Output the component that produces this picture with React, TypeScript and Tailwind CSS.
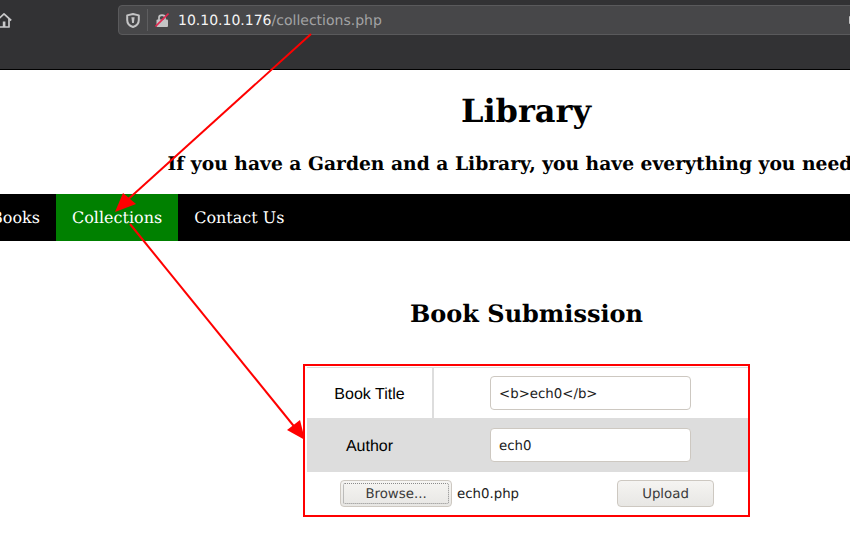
const serif = { fontFamily: '"DejaVu Serif", serif' };
const dejavu = { fontFamily: '"DejaVu Sans", sans-serif' };

function HomeIcon() {
  return (
    <svg width="16" height="15" viewBox="0 0 16 15" className="shrink-0 -ml-[4px]" fill="none" stroke="#c9c9ca" strokeWidth="1.7" strokeLinejoin="round">
      <path d="M0.8 7.5 L8 0.9 L15.2 7.5" />
      <path d="M3 6 V14 H13 V6" />
      <rect x="6.8" y="8.5" width="2.6" height="5.5" fill="#c9c9ca" stroke="none" />
    </svg>
  );
}

function ShieldIcon() {
  return (
    <svg width="14" height="15" viewBox="0 0 14 15" fill="none">
      <path d="M7 1 L12.8 2.4 V7 C12.8 10.6 10 13 7 14 C4 13 1.2 10.6 1.2 7 V2.4 Z" stroke="#c4c4c5" strokeWidth="2" strokeLinejoin="round" />
      <path d="M5.4 4.2 H8.6 L7.9 10 H6.1 Z" fill="#c4c4c5" />
    </svg>
  );
}

function BrokenLockIcon() {
  return (
    <svg width="14" height="14" viewBox="0 0 14 14" fill="none">
      <rect x="1.5" y="6.5" width="11.5" height="7.5" rx="1" fill="#c4c4c5" />
      <path d="M4 7 V4.5 C4 1.2 10 1.2 10 4.5 V7" stroke="#c4c4c5" strokeWidth="1.7" />
      <path d="M0.5 13.5 L13.5 0.5" stroke="#e22850" strokeWidth="1.6" />
    </svg>
  );
}

function Arrows() {
  return (
    <svg width="850" height="533" className="absolute top-0 left-0 pointer-events-none">
      <path d="M311 34 L124 203" stroke="#ff0000" strokeWidth="2" fill="none" />
      <path d="M115 212 L123 193 L136 204 Z" fill="#ff0000" />
      <path d="M130 224 L297 430" stroke="#ff0000" strokeWidth="2" fill="none" />
      <path d="M305 440 L287 430 L300 420 Z" fill="#ff0000" />
    </svg>
  );
}

export default function App() {
  return (
    <div className="relative w-[850px] h-[533px] overflow-hidden bg-white [text-rendering:geometricPrecision]">
      <div className="h-[70px] bg-[#323234] border-b border-black">
        <div className="flex items-center h-[40px]">
          <HomeIcon />
          <div className="ml-[106px] flex items-center h-[30px] w-[760px] shrink-0 bg-[#474749] border border-[#5a5a5c] rounded-[4px]" style={dejavu}>
            <div className="w-[28px] flex justify-center shrink-0"><ShieldIcon /></div>
            <div className="w-px h-[22px] bg-[#5e5e60]" />
            <div className="ml-[7px] shrink-0"><BrokenLockIcon /></div>
            <span className="ml-[9px] pt-[2px] text-[14px] text-[#f4f4f4]">10.10.10.176<span className="text-[#a3a3a4]">/collections.php</span></span>
            <div className="ml-auto mr-[25px] w-[3px] h-[8px] rounded-[1px] bg-[#c4c4c5]" />
          </div>
        </div>
      </div>

      <div className="text-black text-center" style={serif}>
        <h1 className="w-[1052px] pt-[19px] text-[32px] leading-[44px] font-bold">Library</h1>
        <h3 className="w-[1020px] mt-[19px] text-[18.72px] leading-[24px] font-bold whitespace-nowrap">If you have a Garden and a Library, you have everything you need</h3>
      </div>

      <nav className="mt-[18px] h-[47px] bg-black flex text-[16px] text-white" style={serif}>
        <a className="-ml-[25px] px-[16px] leading-[47px]">Books</a>
        <a className="px-[16px] leading-[47px] bg-[#008000]">Collections</a>
        <a className="px-[16px] leading-[47px]">Contact Us</a>
      </nav>

      <div className="w-[1053px] text-center" style={serif}>
        <h2 className="pt-[56px] text-[24px] leading-[34px] font-bold">Book Submission</h2>
      </div>

      <div className="ml-[303px] mt-[33px] w-[447px] h-[153px] border-2 border-[#ff0000] pl-[2px] pt-[1px] bg-white" style={{ fontFamily: '"Liberation Sans", sans-serif' }}>
        <div className="flex h-[51px] border-t border-[#dddddd]">
          <div className="w-[127px] pt-[3px] flex items-center justify-center border-r-2 border-[#dddddd] text-[16px]">Book Title</div>
          <div className="flex-1 flex items-center pl-[56px]">
            <div className="w-[201px] h-[34px] border border-[#cdc8c1] rounded-[4px] bg-white px-[8px] leading-[36px] text-[13.33px] text-[#1c1c1c]" style={dejavu}>&lt;b&gt;ech0&lt;/b&gt;</div>
          </div>
        </div>
        <div className="flex h-[54px] bg-[#dddddd]">
          <div className="w-[127px] pt-[3px] -ml-[1px] flex items-center justify-center text-[16px]">Author</div>
          <div className="flex-1 flex items-center pl-[57px]">
            <div className="w-[201px] h-[34px] border border-[#cdc8c1] rounded-[4px] bg-white px-[8px] leading-[36px] text-[13.33px] text-[#1c1c1c]" style={dejavu}>ech0</div>
          </div>
        </div>
        <div className="flex items-center h-[43px] text-[13.33px] text-[#1c1c1c]" style={dejavu}>
          <div className="ml-[33px] w-[112px] h-[27px] border border-[#cdc8c1] rounded-[4px] bg-gradient-to-b from-[#f5f4f2] to-[#e8e7e4] p-[2px]">
            <div className="h-full pt-[2px] border border-dotted border-[#8a8a8a] rounded-[2px] flex items-center justify-center text-[#3a3a3a]">Browse...</div>
          </div>
          <span className="ml-[5px] pt-[2px] w-[62px] shrink-0">ech0.php</span>
          <div className="ml-[98px] pt-[2px] w-[97px] h-[27px] border border-[#cdc8c1] rounded-[4px] bg-gradient-to-b from-[#f5f4f2] to-[#e8e7e4] flex items-center justify-center text-[#3a3a3a]">Upload</div>
        </div>
      </div>

      <Arrows />
    </div>
  );
}
